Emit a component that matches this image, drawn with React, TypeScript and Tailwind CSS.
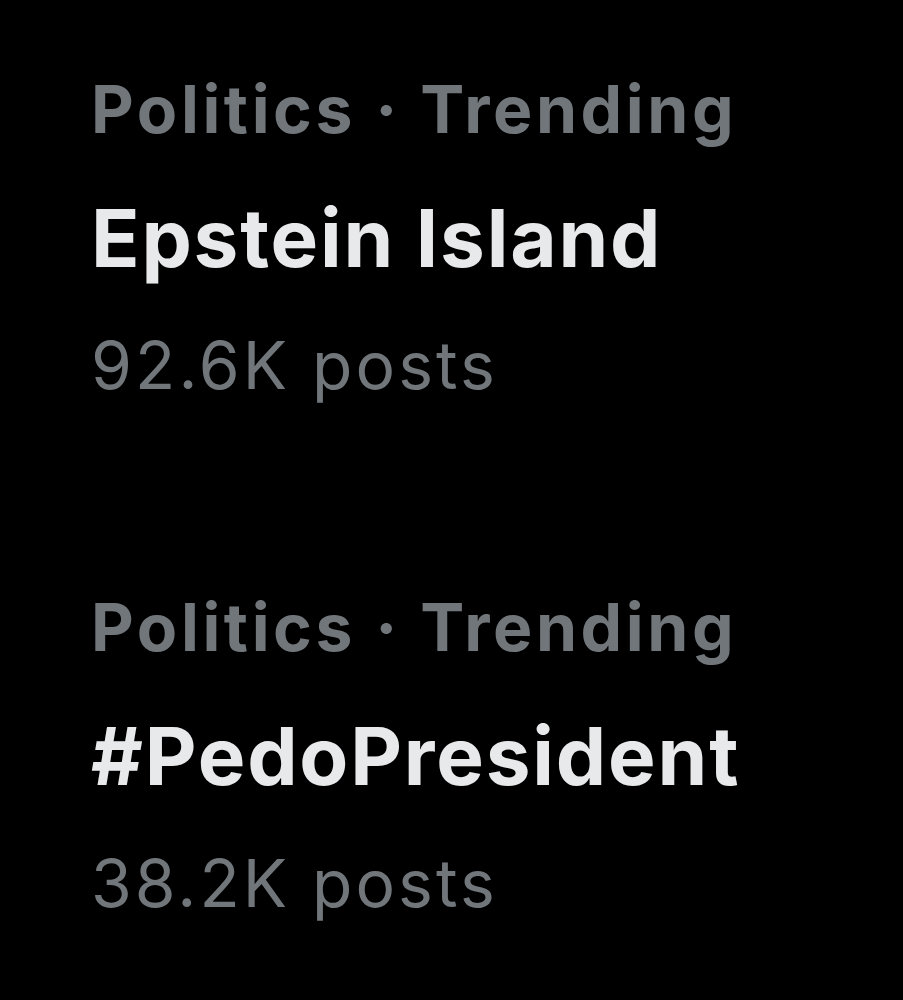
const trends = [
  { category: "Politics · Trending", title: "Epstein Island", posts: "92.6K posts" },
  { category: "Politics · Trending", title: "#PedoPresident", posts: "38.2K posts" },
];

export default function App() {
  return (
    <div className="min-h-[1000px] bg-black pl-[91px] pt-[76px] font-['Inter',sans-serif]">
      <div className="flex flex-col gap-[196px]">
        {trends.map((t) => (
          <div key={t.title} className="flex flex-col">
            <div className="text-[66px] font-bold leading-none text-[#71767b] tracking-[3.6px]">
              {t.category}
            </div>
            <div className="mt-[56px] text-[80px] font-bold leading-none text-[#e7e9ea] tracking-[1.8px]">
              {t.title}
            </div>
            <div className="mt-[54px] text-[66px] leading-none text-[#71767b] tracking-[3.1px]">
              {t.posts}
            </div>
          </div>
        ))}
      </div>
    </div>
  );
}
